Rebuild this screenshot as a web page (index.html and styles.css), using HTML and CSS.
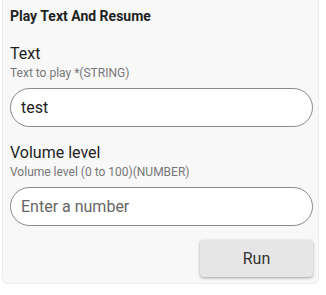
FILE: index.html
```html
<!DOCTYPE html>
<html>
<head>
  <meta charset="utf-8">
  <title>Play Text And Resume</title>
  <link rel="stylesheet" href="styles.css">
</head>
<body>
  <div class="card">
    <div class="card-title">Play Text And Resume</div>
    <div class="fields">
      <div class="field">
        <div class="field-label">Text</div>
        <div class="field-help">Text to play *(STRING)</div>
        <input class="field-input" type="text" value="test">
      </div>
      <div class="field">
        <div class="field-label">Volume level</div>
        <div class="field-help">Volume level (0 to 100)(NUMBER)</div>
        <input class="field-input" type="text" placeholder="Enter a number">
      </div>
    </div>
    <div class="actions">
      <button class="run-btn">Run</button>
    </div>
  </div>
</body>
</html>
```

FILE: styles.css
```css
body {
  margin: 0;
  background: #ffffff;
  font-family: Roboto, "Liberation Sans", sans-serif;
  color: #212121;
}
.card {
  margin: 0 7px 0 2px;
  padding: 7px 5px 6px 7px;
  background: #f8f8f8;
  border: 1px solid #ececec;
  border-top: none;
  border-radius: 0 0 6px 6px;
}
.card-title {
  font-size: 14px;
  font-weight: 700;
  line-height: 18px;
  margin-bottom: 19px;
  color: #1f1f1f;
}
.fields {
  display: flex;
  flex-direction: column;
  gap: 16px;
}
.field-label {
  font-size: 16px;
  line-height: 20px;
  color: #1f1f1f;
}
.field-help {
  font-size: 12px;
  line-height: 18px;
  color: #777777;
  margin-bottom: 6px;
}
.field-input {
  display: block;
  width: 100%;
  box-sizing: border-box;
  height: 39px;
  padding: 0 10px;
  border: 1px solid #8a8a8a;
  border-radius: 20px;
  background: #ffffff;
  font-family: Roboto, "Liberation Sans", sans-serif;
  font-size: 16px;
  color: #222222;
  outline: none;
}
.field-input::placeholder {
  color: #666666;
}
.actions {
  display: flex;
  justify-content: flex-end;
  margin-top: 14px;
}
.run-btn {
  width: 113px;
  height: 37px;
  border: none;
  border-radius: 4px;
  background: #e6e6e6;
  box-shadow: 0 1px 3px rgba(0, 0, 0, 0.35);
  font-family: Roboto, "Liberation Sans", sans-serif;
  font-size: 16px;
  color: #333333;
}
```
